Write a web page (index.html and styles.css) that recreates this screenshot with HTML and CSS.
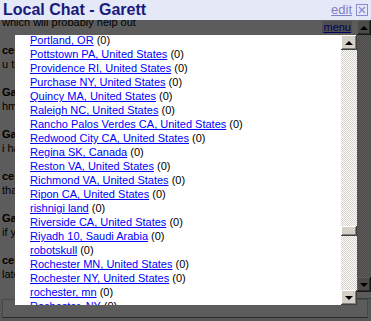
FILE: index.html
```html
<!DOCTYPE html>
<html lang="en">
<head>
  <meta charset="UTF-8" />
  <title>Local Chat - Garett</title>
  <link rel="stylesheet" href="styles.css">
</head>
<body>
  <div class="header">
    <h1 class="title">Local Chat - Garett</h1>
    <div class="tools">
      <a class="edit" href="#">edit</a>
      <a class="close" href="#">
        <svg width="12" height="12" viewBox="0 0 12 12">
          <rect x="0.5" y="0.5" width="11" height="11" fill="none" stroke="#8a8ad0"/>
          <path d="M3 3 L9 9 M9 3 L3 9" stroke="#8a8ad0" stroke-width="1.4"/>
        </svg>
      </a>
    </div>
  </div>

  <div class="room">
    <div class="chat">
      <a class="menu" href="#">menu</a>
      <div class="messages">
        <div class="msg"><p class="text">which will probably help out</p></div>
        <div class="msg"><p class="name">cerebus:</p><p class="text">u think so? maybe</p></div>
        <div class="msg"><p class="name">Garett:</p><p class="text">hmm not sure yet</p></div>
        <div class="msg"><p class="name">Garett:</p><p class="text">i have to check</p></div>
        <div class="msg"><p class="name">cerebus:</p><p class="text">thanks anyway</p></div>
        <div class="msg"><p class="name">Garett:</p><p class="text">if you want to</p></div>
        <div class="msg"><p class="name">cerebus:</p><p class="text">later then</p></div>
      </div>
    </div>
    <div class="scrollbar outer">
      <div class="sb-btn"><span class="arrow up"></span></div>
      <div class="sb-track"></div>
      <div class="sb-btn"><span class="arrow down"></span></div>
    </div>
  </div>

  <div class="inputbar">
    <textarea class="say"></textarea>
  </div>

  <div class="overlay"></div>

  <div class="popup">
    <ul class="places">
      <li><a href="#">Portland, OR</a> (0)</li>
      <li><a href="#">Pottstown PA, United States</a> (0)</li>
      <li><a href="#">Providence RI, United States</a> (0)</li>
      <li><a href="#">Purchase NY, United States</a> (0)</li>
      <li><a href="#">Quincy MA, United States</a> (0)</li>
      <li><a href="#">Raleigh NC, United States</a> (0)</li>
      <li><a href="#">Rancho Palos Verdes CA, United States</a> (0)</li>
      <li><a href="#">Redwood City CA, United States</a> (0)</li>
      <li><a href="#">Regina SK, Canada</a> (0)</li>
      <li><a href="#">Reston VA, United States</a> (0)</li>
      <li><a href="#">Richmond VA, United States</a> (0)</li>
      <li><a href="#">Ripon CA, United States</a> (0)</li>
      <li><a href="#">rishnigi land</a> (0)</li>
      <li><a href="#">Riverside CA, United States</a> (0)</li>
      <li><a href="#">Riyadh 10, Saudi Arabia</a> (0)</li>
      <li><a href="#">robotskull</a> (0)</li>
      <li><a href="#">Rochester MN, United States</a> (0)</li>
      <li><a href="#">Rochester NY, United States</a> (0)</li>
      <li><a href="#">rochester, mn</a> (0)</li>
      <li><a href="#">Rochester, NY</a> (0)</li>
    </ul>
    <div class="scrollbar inner">
      <div class="sb-btn"><span class="arrow up"></span></div>
      <div class="sb-track">
        <div class="sb-thumb"></div>
      </div>
      <div class="sb-btn"><span class="arrow down"></span></div>
    </div>
  </div>
</body>
</html>
```

FILE: styles.css
```css
body { margin: 0; width: 371px; height: 321px; overflow: hidden; position: relative; background: #fff; font-family: "Liberation Sans", Arial, sans-serif; }

.header { height: 20px; background: #e4e8f7; display: flex; align-items: center; justify-content: space-between; padding: 0 3px; }
.title { margin: 0; font-size: 16px; font-weight: bold; color: #1a1a7c; line-height: 20px; }
.tools { display: flex; align-items: center; gap: 4px; }
.edit { color: #8080c8; font-size: 13px; line-height: 14px; }
.close { display: block; width: 12px; height: 12px; }
.close svg { display: block; }

.room { display: flex; height: 279px; }
.chat { flex: 1; position: relative; overflow: hidden; background: #fff; }
.menu { position: absolute; top: 1px; right: 5px; background: #d8d8d8; color: #0000ff; font-size: 11px; line-height: 12px; padding: 0 1px; }
.messages { margin-top: -5px; padding-left: 2px; font-size: 11px; color: #000; }
.msg { margin-bottom: 14px; }
.msg p { margin: 0; line-height: 14px; white-space: nowrap; }
.name { font-weight: bold; }

.scrollbar { display: flex; flex-direction: column; }
.scrollbar.outer { width: 14px; padding-bottom: 6px; border-bottom: 1px solid #aaa; box-sizing: border-box; }
.scrollbar.inner { width: 16px; }
.sb-btn { height: 15px; background: #d4d0c8; box-sizing: border-box; display: flex; align-items: center; justify-content: center;
  box-shadow: inset -1px -1px 0 #404040, inset 1px 1px 0 #fff, inset -2px -2px 0 #808080; }
.sb-track { flex: 1; position: relative; background: repeating-conic-gradient(#d4d0c8 0 25%, #fff 0 50%) 0 0 / 2px 2px; }
.sb-thumb { position: absolute; left: 0; right: 0; top: 176px; height: 10px; background: #d4d0c8;
  box-shadow: inset -1px -1px 0 #404040, inset 1px 1px 0 #fff, inset -2px -2px 0 #808080; }
.arrow { width: 0; height: 0; border-left: 4px solid transparent; border-right: 4px solid transparent; }
.arrow.up { border-bottom: 4px solid #000; }
.arrow.down { border-top: 4px solid #000; }

.inputbar { height: 22px; background: #f0f0f0; padding-left: 2px; }
.say { display: block; width: 366px; height: 19px; margin: 0; padding: 0; box-sizing: border-box; resize: none; background: #fff;
  border: 1px solid #c8c8c8; border-bottom-color: #777; }

.overlay { position: absolute; top: 20px; left: 0; right: 0; bottom: 0; background: rgba(0, 0, 0, 0.64); }

.popup { position: absolute; left: 15px; top: 35px; width: 342px; height: 270px; background: #fff; display: flex; overflow: hidden; }
.places { flex: 1; list-style: none; margin: -2px 0 0; padding: 0 0 0 15px; font-size: 11px; color: #000; }
.places li { line-height: 14px; white-space: nowrap; }
.places a { color: #0000ff; }
```
